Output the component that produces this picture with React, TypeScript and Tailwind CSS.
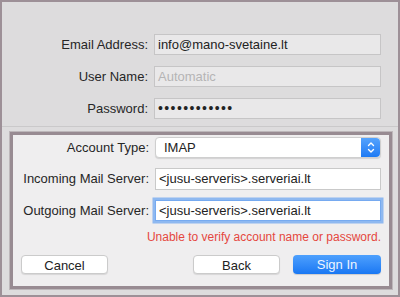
const font = { fontFamily: '"Liberation Sans", Arial, sans-serif' }

function Label({ children, w }: { children: string; w: string }) {
  return <div className={`${w} shrink-0 text-right text-[13px] text-[#262626]`}>{children}</div>
}

function Stepper() {
  return (
    <div className="flex h-full w-[19px] items-center justify-center rounded-r-[4px] bg-gradient-to-b from-[#55a3fd] to-[#1c7af4]">
      <svg width="8" height="13" viewBox="0 0 8 13" fill="none" stroke="white" strokeWidth="1.4" strokeLinecap="round" strokeLinejoin="round">
        <path d="M1.5 4.5 L4 2 L6.5 4.5" />
        <path d="M1.5 8.5 L4 11 L6.5 8.5" />
      </svg>
    </div>
  )
}

export default function App() {
  return (
    <div style={font} className="flex h-[297px] w-[400px] flex-col border-2 border-[#9d9097] bg-[#dddcdd]">
      {/* top section */}
      <div className="flex flex-col gap-[11px] pt-[32px]">
        <div className="flex h-[21px] items-center gap-[6px]">
          <Label w="w-[146px]">Email Address:</Label>
          <div className="flex h-full w-[227px] items-center border border-[#c6c5c6] bg-[#e9e8e9] px-[3px] text-[13px] text-[#222]">
            info@mano-svetaine.lt
          </div>
        </div>
        <div className="flex h-[21px] items-center gap-[6px]">
          <Label w="w-[146px]">User Name:</Label>
          <div className="flex h-full w-[227px] items-center border border-[#c6c5c6] bg-[#e9e8e9] px-[3px] text-[13px] text-[#b5b4b5]">
            Automatic
          </div>
        </div>
        <div className="flex h-[21px] items-center gap-[6px]">
          <Label w="w-[146px]">Password:</Label>
          <div className="flex h-full w-[227px] items-center border border-[#c6c5c6] bg-[#e9e8e9] px-[3px] text-[14px] tracking-[1.4px] text-[#222]">
            ••••••••••••
          </div>
        </div>
      </div>
      <div className="mt-[7px] h-px bg-[#cac9ca]" />

      {/* account box */}
      <div className="mb-[5px] ml-[7px] mr-[5px] mt-[4px] flex flex-1 border border-[#bdb7ba]">
        <div className="flex flex-1 flex-col border-[3px] border-[#988b92] bg-[#efeeef] pr-[8px] pt-[2px]">
          <div className="flex h-[21px] items-center gap-[6px]">
            <Label w="w-[136px]">Account Type:</Label>
            <div className="flex h-full w-[226px] items-center rounded-[4px] border border-[#cfcfcf] bg-white shadow-[0_1px_1px_rgba(0,0,0,0.12)]">
              <div className="flex-1 pl-[8px] text-[13px] text-[#222]">IMAP</div>
              <Stepper />
            </div>
          </div>
          <div className="mt-[10px] flex h-[22px] items-center gap-[6px]">
            <Label w="w-[136px]">Incoming Mail Server:</Label>
            <div className="flex h-full w-[226px] items-center border border-[#c9c9c9] bg-white px-[3px] text-[13px] text-[#222]">
              &lt;jusu-serveris&gt;.serveriai.lt
            </div>
          </div>
          <div className="mt-[10px] flex h-[21px] items-center gap-[6px]">
            <Label w="w-[136px]">Outgoing Mail Server:</Label>
            <div className="flex h-full w-[226px] items-center border border-[#76aaf0] bg-white px-[3px] text-[13px] text-[#222] shadow-[0_0_0_2.5px_rgba(110,165,240,0.75)]">
              &lt;jusu-serveris&gt;.serveriai.lt
            </div>
          </div>
          <div className="mt-[9px] text-right text-[12px] leading-[15px] text-[#e5473e]">
            Unable to verify account name or password.
          </div>
          <div className="mt-[10px] flex items-center justify-between pl-[8px]">
            <button className="h-[19px] w-[87px] rounded-[4px] border border-[#cbcbcb] bg-white text-[13px] text-[#222] shadow-[0_1px_1px_rgba(0,0,0,0.1)]">
              Cancel
            </button>
            <div className="flex items-center gap-[13px]">
              <button className="h-[19px] w-[87px] rounded-[4px] border border-[#cbcbcb] bg-white text-[13px] text-[#222] shadow-[0_1px_1px_rgba(0,0,0,0.1)]">
                Back
              </button>
              <button className="h-[19px] w-[88px] rounded-[4px] bg-gradient-to-b from-[#4da0fd] to-[#1877f3] text-[13px] text-[#eef5ff] shadow-[0_1px_1px_rgba(0,0,0,0.15)]">
                Sign In
              </button>
            </div>
          </div>
        </div>
      </div>
    </div>
  )
}
